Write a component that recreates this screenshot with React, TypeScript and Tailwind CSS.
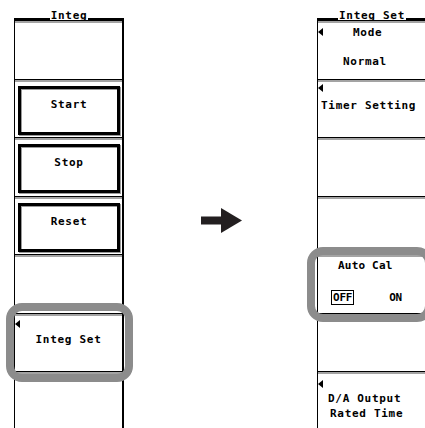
import React from "react";

const Tri = () => (
  <svg width="5" height="8" viewBox="0 0 5 8" className="block shrink-0">
    <polygon points="5,0 0,4 5,8" fill="#000" />
  </svg>
);

function Slot({ h, children }: { h: string; children?: React.ReactNode }) {
  return (
    <div className={`${h} flex flex-col shrink-0`}>
      <div className="h-px bg-black shrink-0" />
      <div className="h-[2px] bg-[#a3a3a3] shrink-0" />
      <div className="flex-1 flex flex-col">{children}</div>
    </div>
  );
}

function Header({ title }: { title: string }) {
  return (
    <div className="h-[20px] flex items-end shrink-0">
      <div className="flex-1 h-[1.5px] bg-black mb-[0.5px]" />
      <span className="leading-none -mb-[1px] px-[1px]">{title}</span>
      <div className="flex-1 h-[1.5px] bg-black mb-[0.5px]" />
    </div>
  );
}

function Btn({ label }: { label: string }) {
  return (
    <div className="mt-[4px] ml-[3px] mr-[2px] h-[49px] border-[3px] border-black bg-white shadow-[1px_1px_0_#9a9a9a,inset_1px_1px_0_#9a9a9a] text-center pt-[10px] leading-none">
      {label}
    </div>
  );
}

export default function App() {
  return (
    <div className="relative w-[425px] h-[428px] bg-white overflow-hidden font-['DejaVu_Sans_Mono',monospace] font-bold text-[11px] tracking-[0.7px] text-black">
      <div className="flex h-full">
        <div className="w-[14px] shrink-0" />
        {/* Left panel */}
        <div className="w-[110px] shrink-0 flex flex-col">
          <Header title="Integ" />
          <div className="flex-1 flex flex-col border-l border-r-2 border-black">
            <Slot h="h-[59px]" />
            <Slot h="h-[58px]">
              <Btn label="Start" />
            </Slot>
            <Slot h="h-[59px]">
              <Btn label="Stop" />
            </Slot>
            <Slot h="h-[58px]">
              <Btn label="Reset" />
            </Slot>
            <Slot h="h-[59px]" />
            <Slot h="h-[58px]">
              <div className="pt-[4px]">
                <Tri />
              </div>
              <div className="text-center leading-none mt-[6px]">Integ Set</div>
            </Slot>
            <Slot h="h-[58px]" />
          </div>
        </div>
        {/* Middle arrow */}
        <div className="w-[193px] shrink-0 flex flex-col">
          <svg width="41" height="25" viewBox="0 0 41 25" className="ml-[77px] mt-[208px] block">
            <rect x="0" y="8.5" width="21" height="8" fill="#231f20" />
            <polygon points="20,0 41,12.5 20,25" fill="#231f20" />
          </svg>
        </div>
        {/* Right panel */}
        <div className="w-[110px] shrink-0 flex flex-col">
          <Header title="Integ Set" />
          <div className="flex-1 flex flex-col border-l border-r-2 border-black">
            <Slot h="h-[59px]">
              <div className="flex items-start pt-[3px]">
                <div className="pt-[2px]">
                  <Tri />
                </div>
                <span className="leading-none ml-[30px] mt-[1px]">Mode</span>
              </div>
              <div className="leading-none pl-[25px] mt-[18px]">Normal</div>
            </Slot>
            <Slot h="h-[58px]">
              <div className="pt-[2px]">
                <Tri />
              </div>
              <div className="leading-none pl-[3px] mt-[8px] whitespace-nowrap">Timer Setting</div>
            </Slot>
            <Slot h="h-[59px]" />
            <Slot h="h-[58px]" />
            <Slot h="h-[59px]">
              <div className="leading-none pl-[20px] pt-[3px] tracking-[0.2px]">Auto Cal</div>
              <div className="flex items-center pl-[13px] mt-[19px]">
                <span className="border border-black leading-none px-px py-[1px] tracking-[-0.2px]">OFF</span>
                <span className="leading-none ml-[35px] tracking-[-0.5px]">ON</span>
              </div>
            </Slot>
            <Slot h="h-[58px]" />
            <Slot h="h-[58px]">
              <div className="pt-[6px]">
                <Tri />
              </div>
              <div className="leading-none pl-[10px] mt-[5px] whitespace-nowrap">D/A Output</div>
              <div className="leading-none pl-[12px] mt-[4px] whitespace-nowrap">Rated Time</div>
            </Slot>
          </div>
        </div>
      </div>
      {/* Highlights */}
      <div className="absolute left-[6px] top-[303px] w-[127px] h-[79px] rounded-[16px] border-[8px] border-[#8c8c8c]" />
      <div className="absolute left-[307px] top-[247px] w-[126px] h-[75px] rounded-[16px] border-[8px] border-[#8c8c8c]" />
    </div>
  );
}
